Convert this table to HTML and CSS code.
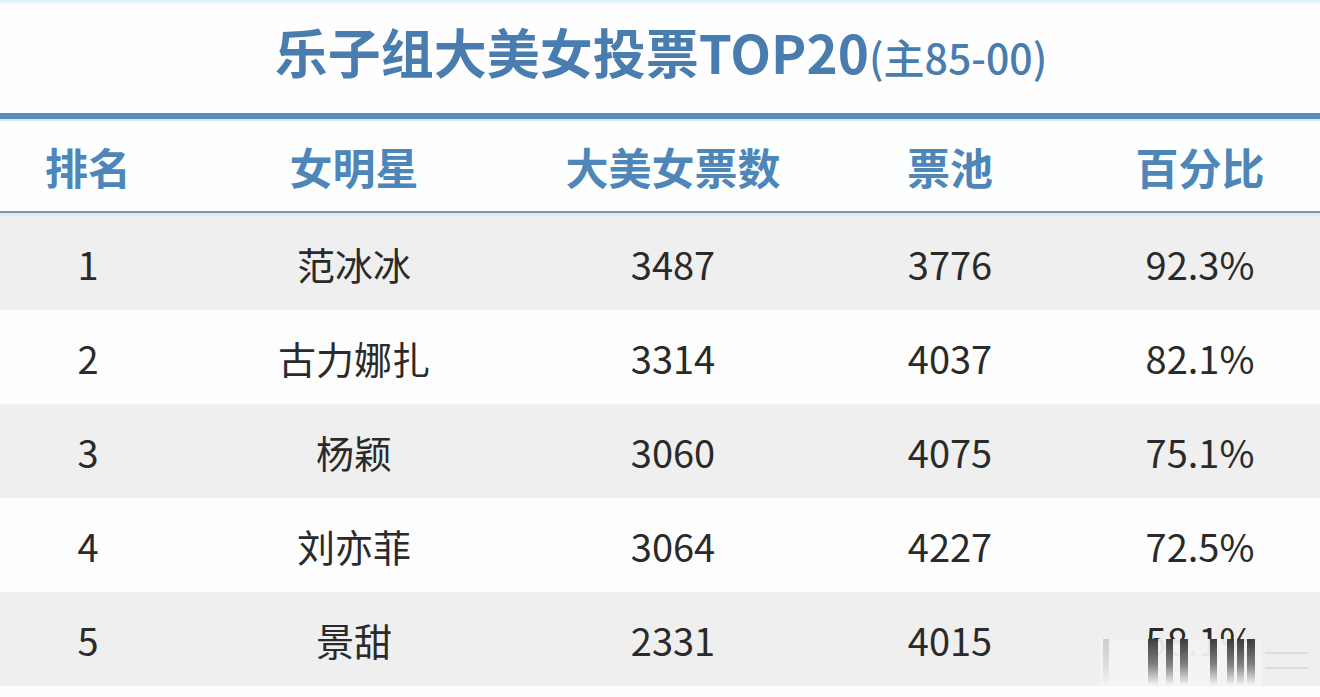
FILE: index.html
```html
<!DOCTYPE html>
<html lang="zh-CN">
<head>
<meta charset="utf-8">
<title>乐子组大美女投票TOP20</title>
<link rel="stylesheet" href="styles.css">
</head>
<body>
<div class="page">
  <div class="topband"></div>
  <div class="title"><span class="t-main">乐子组大美女投票TOP20</span><span class="t-sub">(主85-00)</span></div>
  <div class="rule-blue"></div>
  <div class="row head">
    <div class="c c1">排名</div>
    <div class="c c2">女明星</div>
    <div class="c c3">大美女票数</div>
    <div class="c c4">票池</div>
    <div class="c c5">百分比</div>
  </div>
  <div class="rule-head"></div>
  <div class="row gray">
    <div class="c c1">1</div><div class="c c2">范冰冰</div><div class="c c3">3487</div><div class="c c4">3776</div><div class="c c5">92.3%</div>
  </div>
  <div class="row white">
    <div class="c c1">2</div><div class="c c2">古力娜扎</div><div class="c c3">3314</div><div class="c c4">4037</div><div class="c c5">82.1%</div>
  </div>
  <div class="row gray">
    <div class="c c1">3</div><div class="c c2">杨颖</div><div class="c c3">3060</div><div class="c c4">4075</div><div class="c c5">75.1%</div>
  </div>
  <div class="row white">
    <div class="c c1">4</div><div class="c c2">刘亦菲</div><div class="c c3">3064</div><div class="c c4">4227</div><div class="c c5">72.5%</div>
  </div>
  <div class="row gray last">
    <div class="c c1">5</div><div class="c c2">景甜</div><div class="c c3">2331</div><div class="c c4">4015</div><div class="c c5">58.1%</div>
    <div class="wm">
      <i class="b b1"></i><i class="b b2"></i><i class="b b3"></i><i class="b b4"></i><i class="b b5"></i><i class="b b6"></i><i class="b b7"></i><i class="b b8"></i>
    </div>
    <div class="wm-lines"><i></i><i></i></div>
  </div>
</div>
</body>
</html>
```
FILE: styles.css
```css
html, body {
  margin: 0;
  padding: 0;
  background: #ffffff;
}
body {
  width: 1320px;
  height: 697px;
  overflow: hidden;
  font-family: "Noto Sans CJK SC", "Noto Sans", sans-serif;
}
.page {
  display: flex;
  flex-direction: column;
  width: 1320px;
  height: 697px;
  background: #fdfdfd;
}
.topband {
  height: 4px;
  background: linear-gradient(to bottom, #d6f1f8, #f4fbfc);
}
.title {
  height: 109px;
  display: flex;
  align-items: baseline;
  justify-content: center;
  box-sizing: border-box;
  padding-top: 17px;
  padding-left: 2px;
  color: #4a7daf;
  font-weight: 700;
  background: #fefefe;
}
.t-main {
  font-size: 53px;
  line-height: 60px;
}
.t-sub {
  font-size: 41px;
  font-weight: 500;
  line-height: 60px;
}
.rule-blue {
  height: 6px;
  background: #5a8cb9;
  border-bottom: 2px solid #cfe9f6;
}
.row {
  display: grid;
  grid-template-columns: 176px 356px 282px 272px 228px;
  align-items: center;
  height: 94px;
  position: relative;
}
.c {
  text-align: center;
}
.head {
  height: 90px;
  color: #4e86b9;
  font-weight: 700;
  font-size: 43px;
  background: #fdfefe;
}
.rule-head {
  height: 2px;
  background: #8393a0;
  border-bottom: 3px solid #d7eef8;
}
.gray, .white {
  color: #2a2a2a;
  font-size: 38px;
  font-weight: 400;
}
.gray {
  background: #efefef;
}
.white {
  background: #fdfdfd;
}
.wm {
  position: absolute;
  left: 1100px;
  top: 47px;
  width: 162px;
  height: 47px;
  background: linear-gradient(to bottom, rgba(242,242,242,0.92), #f4f4f4);
}
.b {
  position: absolute;
  top: 0;
  height: 46px;
  background: linear-gradient(to bottom, rgba(30,30,30,0.85), rgba(50,50,50,0.6) 55%, rgba(220,220,220,0));
}
.b1 { left: 3px; width: 6px; opacity: 0.2; }
.b2 { left: 48px; width: 10px; }
.b3 { left: 66px; width: 7px; }
.b4 { left: 80px; width: 8px; }
.b5 { left: 110px; width: 7px; }
.b6 { left: 127px; width: 7px; }
.b7 { left: 137px; width: 7px; }
.b8 { left: 147px; width: 8px; }
.wm-lines {
  position: absolute;
  left: 1265px;
  top: 60px;
  width: 43px;
  display: flex;
  flex-direction: column;
  gap: 13px;
}
.wm-lines i {
  display: block;
  height: 2px;
  background: #dddddd;
}
```
